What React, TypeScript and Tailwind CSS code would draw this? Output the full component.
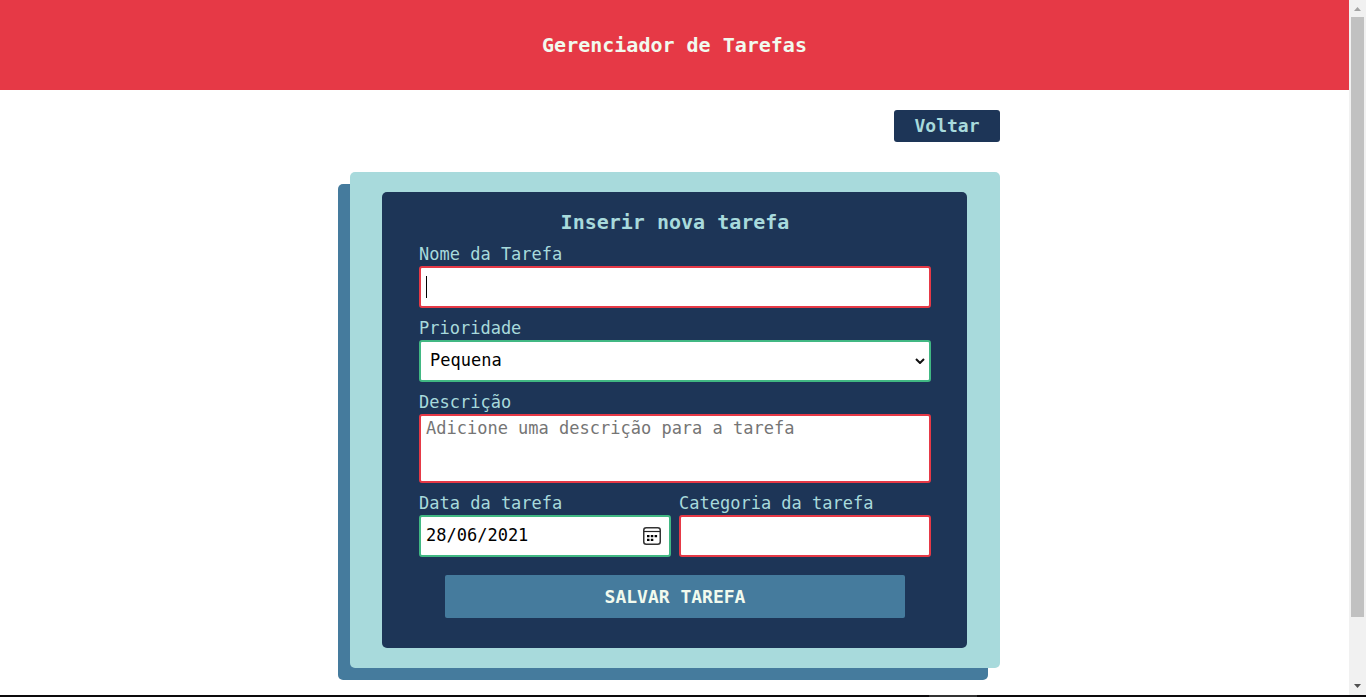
import type { ReactNode } from "react";

const control =
  "block w-full rounded-[3px] border-2 bg-white px-[5px] text-[17px] text-black outline-none";

function Field({
  id,
  label,
  children,
}: {
  id: string;
  label: string;
  children: ReactNode;
}) {
  return (
    <div className="min-w-0 flex-1">
      <label htmlFor={id} className="block text-[17px] leading-6">
        {label}
      </label>
      {children}
    </div>
  );
}

function CalendarIcon() {
  return (
    <svg width="18" height="18" viewBox="0 0 18 18" fill="none" aria-hidden="true">
      <rect x="0.75" y="0.75" width="16.5" height="16.5" rx="2.5" stroke="#333" strokeWidth="1.5" />
      <path d="M1 4.500h16" stroke="#222" strokeWidth="1.2" />
      <path
        d="M4 8h2.500v2.200H4zM7.800 8h2.500v2.200H7.800zM11.600 8h2.500v2.200h-2.500zM4 11.800h2.500V14H4zM7.800 11.800h2.500V14H7.800z"
        fill="#000"
      />
    </svg>
  );
}

function ScrollTrack() {
  return (
    <div className="flex w-[17px] shrink-0 flex-col items-center bg-[#f1f1f1]" aria-hidden="true">
      <svg width="17" height="17" viewBox="0 0 17 17" className="shrink-0">
        <path d="M5 11h7L8.500 7z" fill="#a3a3a3" />
      </svg>
      <div className="flex w-full flex-1 flex-col items-center">
        <div className="h-[600px] max-h-full w-[13px] bg-[#c1c1c1]" />
      </div>
      <svg width="17" height="17" viewBox="0 0 17 17" className="shrink-0">
        <path d="M5 6h7L8.500 10z" fill="#505050" />
      </svg>
    </div>
  );
}

export default function App() {
  return (
    <div className="flex min-h-screen flex-col bg-white font-['DejaVu_Sans_Mono',monospace]">
      <div className="flex flex-1">
        <div className="min-w-0 flex-1">
          <header className="bg-[#e63946] px-4 py-[30px] text-center text-[#f1faee]">
            <h1 className="text-xl leading-[30px] font-bold">Gerenciador de Tarefas</h1>
          </header>

          <main className="mx-auto max-w-[650px] py-5">
            <div className="flex justify-end">
              <a
                href="#voltar"
                className="rounded-[3px] bg-[#1d3557] px-5 py-1 text-lg leading-6 font-bold text-[#a8dadc]"
              >
                Voltar
              </a>
            </div>

            <section className="mt-[30px] rounded-[5px] bg-[#a8dadc] py-5 shadow-[-12px_12px_0_#457b9d]">
              <form className="mx-auto w-[90%] rounded-[5px] bg-[#1d3557] pt-4 pr-9 pb-[30px] pl-[37px] text-[#a8dadc]">
                <h2 className="mb-1.5 text-center text-xl leading-7 font-bold">
                  Inserir nova tarefa
                </h2>

                <div className="flex flex-col gap-2">
                  <Field id="nome" label="Nome da Tarefa">
                    <div className="relative">
                      <input
                        id="nome"
                        type="text"
                        className={`${control} h-[42px] border-[#e63946] caret-transparent`}
                      />
                      <span className="absolute inset-y-2.5 left-[7px] w-px bg-black" />
                    </div>
                  </Field>

                  <Field id="prioridade" label="Prioridade">
                    <div className="relative">
                      <select
                        id="prioridade"
                        className="block h-[42px] w-full appearance-none rounded-[3px] border-2 border-[#41b883] bg-white px-[9px] text-[17px] text-black outline-none"
                      >
                        <option>Pequena</option>
                        <option>Média</option>
                        <option>Alta</option>
                      </select>
                      <svg
                        width="10"
                        height="6"
                        viewBox="0 0 10 6"
                        fill="none"
                        aria-hidden="true"
                        className="pointer-events-none absolute top-[18px] right-1.5"
                      >
                        <path d="M1 1l4 4 4-4" stroke="#111" strokeWidth="2" />
                      </svg>
                    </div>
                  </Field>

                  <Field id="descricao" label="Descrição">
                    <textarea
                      id="descricao"
                      placeholder="Adicione uma descrição para a tarefa"
                      className={`${control} h-[69px] resize-none border-[#e63946] leading-6 placeholder:text-[#757575]`}
                    />
                  </Field>

                  <div className="flex gap-2">
                    <Field id="data" label="Data da tarefa">
                      <div className="flex h-[42px] items-center rounded-[3px] border-2 border-[#41b883] bg-white pr-2 pl-[5px]">
                        <input
                          id="data"
                          type="text"
                          defaultValue="28/06/2021"
                          className="min-w-0 flex-1 text-[17px] text-black outline-none"
                        />
                        <button type="button" aria-label="Abrir calendário">
                          <CalendarIcon />
                        </button>
                      </div>
                    </Field>
                    <Field id="categoria" label="Categoria da tarefa">
                      <input
                        id="categoria"
                        type="text"
                        className={`${control} h-[42px] border-[#e63946]`}
                      />
                    </Field>
                  </div>
                </div>

                <button
                  type="submit"
                  className="mx-auto mt-[18px] block h-[43px] w-[90%] rounded-[2px] bg-[#457b9d] text-lg font-bold text-[#f1faee]"
                >
                  SALVAR TAREFA
                </button>
              </form>
            </section>
          </main>
        </div>
        <ScrollTrack />
      </div>
      <div className="flex h-0.5 bg-[#0c0a0c]">
        <div className="ml-[68%] w-12 bg-[#333]" />
      </div>
    </div>
  );
}
